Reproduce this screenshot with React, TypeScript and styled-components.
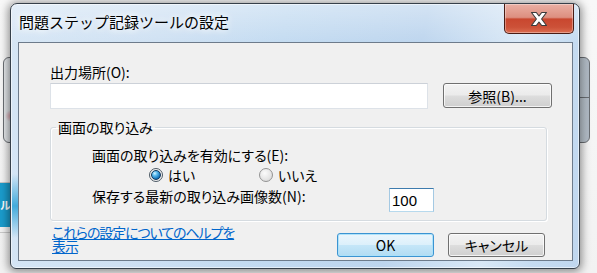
import React from "react";
import styled, { createGlobalStyle } from "styled-components";

const FONT = `"Noto Sans CJK JP", "Noto Sans", sans-serif`;

const GlobalStyle = createGlobalStyle`
  html, body { margin: 0; padding: 0; }
  body { width: 597px; height: 273px; overflow: hidden; background: #f6f6f6; }
  * { box-sizing: border-box; }
`;

const Desktop = styled.div`
  position: relative;
  width: 597px;
  height: 273px;
  overflow: hidden;
  background: linear-gradient(180deg, #f8f8f8 0%, #f2f2f2 100%);
  font-family: ${FONT};
`;

const SideTab = styled.div<{ $side: "left" | "right" }>`
  position: absolute;
  top: 57px;
  height: 86px;
  width: 16px;
  ${(p) => (p.$side === "left" ? "left: 3px;" : "left: 574px;")}
  border: 1px solid #6a6e73;
  border-radius: 6px;
  background: ${(p) =>
    p.$side === "left"
      ? "radial-gradient(circle at 7px 58px, #d99aa4 0, rgba(217,154,164,0) 6px), linear-gradient(90deg, #e6e9ec, #cdd3d9)"
      : "linear-gradient(90deg, #c9d3dc, #aeb8c2)"};
  &::after {
    content: "";
    position: absolute;
    left: 0;
    right: 0;
    top: 39px;
    border-top: 1px solid #6a6e73;
    display: ${(p) => (p.$side === "right" ? "block" : "none")};
  }
`;

const HLine = styled.div<{ $top: number }>`
  position: absolute;
  left: 0;
  width: 12px;
  top: ${(p) => p.$top}px;
  border-top: 1px solid #c9c9c9;
`;

const TealBar = styled.div`
  position: absolute;
  left: 0;
  top: 183px;
  width: 14px;
  height: 44px;
  background: #1b9ccc;
  color: #fff;
  font-size: 11px;
  font-weight: 700;
  line-height: 44px;
  white-space: nowrap;
  overflow: hidden;
  letter-spacing: -1px;
`;

const Window = styled.div`
  position: absolute;
  left: 10px;
  top: 3px;
  width: 570px;
  height: 266px;
  border: 1px solid #36404a;
  border-radius: 7px 7px 6px 6px;
  background:
    linear-gradient(180deg, rgba(40,160,215,0) 0%, rgba(40,160,215,0.85) 50%, rgba(40,160,215,0) 100%) 1px 170px / 7px 64px no-repeat,
    linear-gradient(180deg, rgba(255,255,255,0.35) 0px, rgba(255,255,255,0) 40px),
    linear-gradient(100deg, #d6e6f5 0%, #cfe1f3 25%, #c3dbf1 45%, #bdd5ee 68%, #d9e8f6 84%, #c6dcf1 92%, #c0d7ef 100%);
  box-shadow: inset 0 0 0 1px rgba(255, 255, 255, 0.55), 0 1px 9px 2px rgba(0, 0, 0, 0.42);
  display: flex;
  flex-direction: column;
  padding: 0 6px 7px 7px;
`;

const TitleBar = styled.div`
  height: 38px;
  display: flex;
  justify-content: space-between;
  align-items: flex-start;
`;

const Title = styled.div`
  margin: 8px 0 0 1px;
  font-size: 15px;
  line-height: 20px;
  color: #000;
  text-shadow: 0 0 6px #fff, 0 0 10px rgba(255, 255, 255, 0.9);
`;

const CloseButton = styled.div`
  width: 70px;
  height: 30px;
  margin-right: -1px;
  border: 1px solid #4a1c14;
  border-top: none;
  border-radius: 0 0 5px 5px;
  background: linear-gradient(180deg, #eab0a4 0%, #dd8f80 46%, #c9472f 52%, #cc5138 80%, #dc6d50 100%);
  box-shadow: inset 0 0 0 1px rgba(255, 255, 255, 0.35);
  display: flex;
  align-items: center;
  justify-content: center;
`;

const Client = styled.div`
  flex: 1;
  background: #f0f0f0;
  border: 1px solid #6d7b8b;
  padding: 21px 25px 0 31px;
  display: flex;
  flex-direction: column;
  font-size: 14px;
  line-height: 16px;
  color: #000;
  font-feature-settings: "palt";
`;

const Label = styled.div`
  height: 16px;
  white-space: nowrap;
`;

const PathRow = styled.div`
  display: flex;
  align-items: flex-start;
  margin-top: 3px;
`;

const TextBox = styled.input`
  flex: none;
  width: 378px;
  height: 26px;
  border: 1px solid #dde2e8;
  border-top-color: #ccd1d8;
  background: #fff;
  font-family: ${FONT};
  font-size: 14px;
  padding: 0 2px;
  outline: none;
`;

const NumberBox = styled.input`
  flex: none;
  width: 45px;
  height: 24px;
  border: 1px solid;
  border-color: #3d7bad #a4c9e3 #b7d9ed #a4c9e3;
  background: #fff;
  font-family: "Liberation Sans", Arial, sans-serif;
  font-size: 15px;
  color: #000;
  padding: 0 2px;
  outline: none;
`;

const Button = styled.div<{ $w: number; $h: number; $primary?: boolean }>`
  flex: none;
  width: ${(p) => p.$w}px;
  height: ${(p) => p.$h}px;
  border: 1px solid ${(p) => (p.$primary ? "#3c94d2" : "#707070")};
  border-radius: 3px;
  background: ${(p) =>
    p.$primary
      ? "linear-gradient(180deg, #ecf6fc 0%, #dcf0fb 48%, #c4e6f8 52%, #b2dcf3 100%)"
      : "linear-gradient(180deg, #f3f3f3 0%, #ebebeb 48%, #dddddd 52%, #cfcfcf 100%)"};
  box-shadow: inset 0 0 0 1px ${(p) => (p.$primary ? "rgba(170, 225, 250, 0.9)" : "rgba(255,255,255,0.75)")};
  display: flex;
  align-items: center;
  justify-content: center;
  font-size: 14px;
  white-space: nowrap;
`;

const BrowseButton = styled(Button)`
  margin-left: 15px;
`;

const Group = styled.fieldset`
  margin: 10px 0 0 0;
  padding: 0;
  width: 497px;
  min-inline-size: 0;
  border: 1px solid #d5dbe0;
  border-radius: 3px;
  box-shadow: 1px 1px 0 #ffffff, inset 1px 1px 0 #ffffff;
`;

const Legend = styled.legend`
  margin-left: 5px;
  padding: 0 2px;
  font-size: 14px;
  line-height: 16px;
`;

const GroupInner = styled.div`
  padding: 12px 0 8px 41px;
  display: flex;
  flex-direction: column;
`;

const RadioRow = styled.div`
  display: grid;
  grid-template-columns: 110px auto;
  margin-top: 4px;
  padding-left: 57px;
  height: 16px;
`;

const RadioOption = styled.label`
  display: flex;
  align-items: center;
  gap: 5px;
  white-space: nowrap;
`;

const RadioDot = styled.span<{ $checked?: boolean }>`
  flex: none;
  width: 14px;
  height: 14px;
  border-radius: 50%;
  border: 1px solid ${(p) => (p.$checked ? "#4d5a66" : "#939393")};
  background: ${(p) =>
    p.$checked
      ? "radial-gradient(circle at 50% 50%, #e8e8e8 0, #f6f6f6 100%)"
      : "radial-gradient(circle at 40% 35%, #fbfbfb 0, #e6e6e6 55%, #d2d2d2 100%)"};
  display: flex;
  align-items: center;
  justify-content: center;
  &::after {
    content: "";
    display: ${(p) => (p.$checked ? "block" : "none")};
    width: 8px;
    height: 8px;
    border-radius: 50%;
    border: 1px solid #12385c;
    background: radial-gradient(circle at 35% 30%, #d8f4ff 0, #5bbbef 30%, #1673b9 70%, #0b4a85 100%);
  }
`;

const CountRow = styled.div`
  display: flex;
  align-items: flex-start;
  margin-top: 5px;
`;

const CountLabel = styled.div`
  width: 297px;
  height: 16px;
  white-space: nowrap;
`;

const Footer = styled.div`
  display: flex;
  justify-content: space-between;
  align-items: flex-start;
`;

const HelpLink = styled.a`
  margin: 4px 0 0 2px;
  font-size: 14px;
  line-height: 14px;
  letter-spacing: -1.1px;
  color: #0066cc;
  text-decoration: underline;
  cursor: pointer;
`;

const ButtonGroup = styled.div`
  display: flex;
  gap: 14px;
  margin: 12px 2px 0 0;
`;

const CloseGlyph = () => (
  <svg width="18" height="16" viewBox="0 0 18 16">
    <path
      d="M1.5 1.5 H6.3 L9 5 L11.7 1.5 H16.5 L11.6 8 L16.5 14.5 H11.7 L9 11 L6.3 14.5 H1.5 L6.4 8 Z"
      fill="#ffffff"
      stroke="#3b3b3b"
      strokeWidth="1.1"
      strokeLinejoin="round"
    />
  </svg>
);

export default function App() {
  return (
    <>
      <GlobalStyle />
      <Desktop>
        <SideTab $side="left" />
        <SideTab $side="right" />
        <HLine $top={182} />
        <TealBar>ルお</TealBar>
        <HLine $top={232} />
        <Window>
          <TitleBar>
            <Title>問題ステップ記録ツールの設定</Title>
            <CloseButton>
              <CloseGlyph />
            </CloseButton>
          </TitleBar>
          <Client>
            <Label>出力場所(O):</Label>
            <PathRow>
              <TextBox defaultValue="" />
              <BrowseButton $w={109} $h={25}>
                参照(B)...
              </BrowseButton>
            </PathRow>
            <Group>
              <Legend>画面の取り込み</Legend>
              <GroupInner>
                <Label>画面の取り込みを有効にする(E):</Label>
                <RadioRow>
                  <RadioOption>
                    <RadioDot $checked />
                    はい
                  </RadioOption>
                  <RadioOption>
                    <RadioDot />
                    いいえ
                  </RadioOption>
                </RadioRow>
                <CountRow>
                  <CountLabel>保存する最新の取り込み画像数(N):</CountLabel>
                  <NumberBox defaultValue="100" />
                </CountRow>
              </GroupInner>
            </Group>
            <Footer>
              <HelpLink>
                これらの設定についてのヘルプを
                <br />
                表示
              </HelpLink>
              <ButtonGroup>
                <Button $w={97} $h={24} $primary>
                  OK
                </Button>
                <Button $w={97} $h={24}>
                  キャンセル
                </Button>
              </ButtonGroup>
            </Footer>
          </Client>
        </Window>
      </Desktop>
    </>
  );
}
